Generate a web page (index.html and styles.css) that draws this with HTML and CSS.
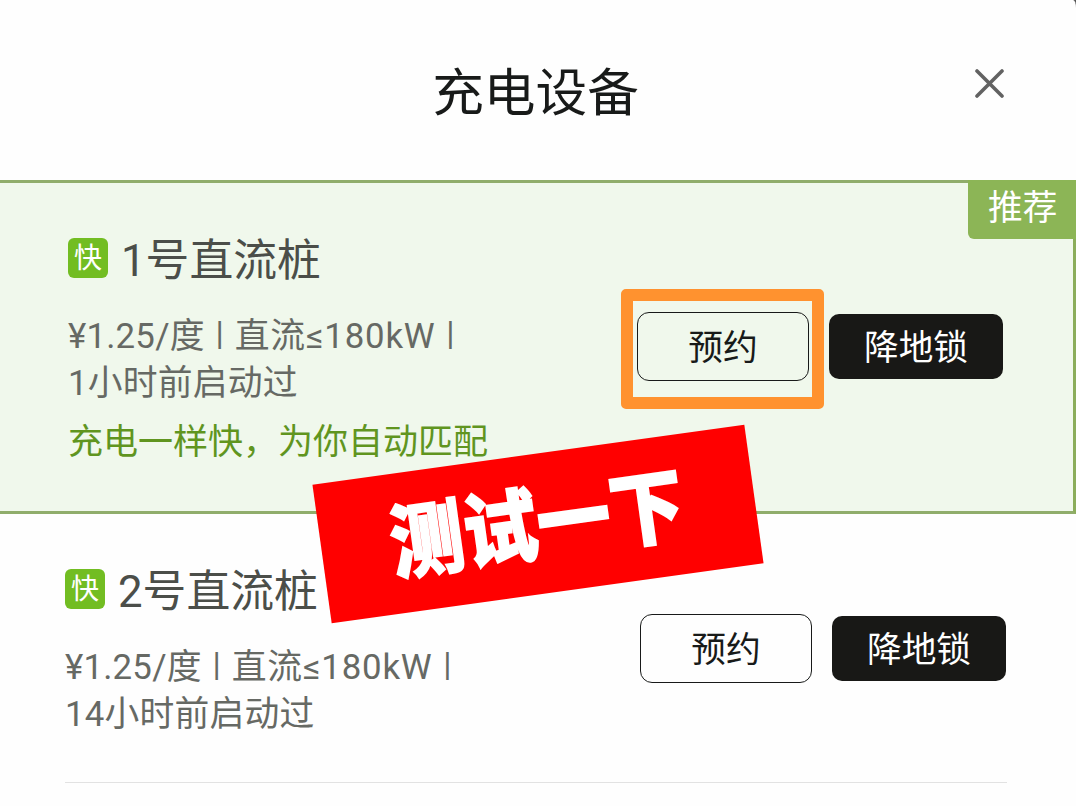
FILE: index.html
```html
<!DOCTYPE html>
<html lang="zh-CN">
<head>
    <meta charset="UTF-8">
    <meta name="viewport" content="width=device-width, initial-scale=1.0">
    <link rel="stylesheet" href="styles.css">
    <title>充电设备</title>
</head>
<body>
    <header class="header">
        <h1>充电设备</h1>
        <button class="close" aria-label="关闭">
            <svg width="30" height="30" viewBox="0 0 30 30" fill="none" stroke="#626262" stroke-width="3.6" stroke-linecap="round">
                <path d="M2 2L27 27M27 2L2 27"/>
            </svg>
        </button>
    </header>

    <div class="device recommended">
        <span class="ribbon">推荐</span>
        <div class="info">
            <h2><span class="tag">快</span>1号直流桩</h2>
            <p class="meta">¥1.25/度<span class="sep">|</span><span class="power">直流≤180kW</span><span class="sep">|</span></p>
            <p class="meta">1小时前启动过</p>
            <p class="match">充电一样快，为你自动匹配</p>
        </div>
        <div class="actions">
            <button class="btn highlight">预约</button>
            <button class="btn dark">降地锁</button>
        </div>
    </div>

    <div class="device">
        <div class="info">
            <h2><span class="tag">快</span>2号直流桩</h2>
            <p class="meta">¥1.25/度<span class="sep">|</span><span class="power">直流≤180kW</span><span class="sep">|</span></p>
            <p class="meta">14小时前启动过</p>
        </div>
        <div class="actions">
            <button class="btn">预约</button>
            <button class="btn dark">降地锁</button>
        </div>
    </div>

    <!-- Sticker lying over both rows -->
    <div class="sticker"><span>测试一下</span></div>
</body>
</html>
```
FILE: styles.css
```css
* {
    box-sizing: border-box;
}

html {
    background-color: #555;
}

body {
    font-family: Roboto, "Noto Sans CJK SC", sans-serif;
    margin: 0;
    height: 806px;
    position: relative;
    overflow: hidden;
    background-color: #fefefe;
    border-top-right-radius: 3px 8px;
}

h1, h2, p {
    margin: 0;
    font-weight: 400;
    white-space: nowrap;
}

.header {
    display: flex;
    justify-content: center;
    height: 180px;
    padding-top: 54px;
    position: relative;
}

h1 {
    font-size: 51.7px;
    line-height: 80px;
    color: #181a19;
    margin-right: 5px;
}

.close {
    position: absolute;
    top: 69px;
    right: 71px;
    width: 30px;
    height: 30px;
    padding: 0;
    border: none;
    background: none;
}

.close svg {
    display: block;
}

.device {
    display: flex;
    justify-content: space-between;
    height: 269px;
    margin: 0 69px 0 65px;
    padding-top: 45px;
    border-bottom: 1px solid #e2e2e2;
}

.recommended {
    position: relative;
    height: 334px;
    margin: 0;
    padding: 45px 71px 0 68px;
    background-color: #f0f8ec;
    border-top: 3px solid #90ad6b;
    border-right: 3px solid #8bad5b;
    border-bottom: 3px solid #90ad6b;
}

.ribbon {
    position: absolute;
    top: -3px;
    right: -3px;
    width: 108px;
    height: 59px;
    padding-left: 20px;
    font-size: 34.7px;
    line-height: 57px;
    color: #fff;
    background-color: #8cb556;
    border-bottom-left-radius: 6px;
}

h2 {
    display: flex;
    align-items: center;
    height: 60px;
    font-size: 43.8px;
    line-height: 60px;
    padding-top: 6px;
    color: #4b4e49;
}

.tag {
    width: 40px;
    height: 40px;
    margin: -6px 13px 0 0;
    border-radius: 6px;
    background-color: #72bd22;
    color: #fff;
    font-size: 28px;
    line-height: 42px;
    text-align: center;
}

.meta {
    font-size: 34.8px;
    line-height: 47px;
    letter-spacing: 0.2px;
    color: #666964;
}

h2 + .meta {
    margin-top: 25px;
}

.sep {
    display: inline-block;
    width: 30px;
    font-size: 34px;
    line-height: 1;
    text-align: center;
    vertical-align: 3px;
}

.power {
    letter-spacing: 0.8px;
}

.match {
    margin-top: 12px;
    font-size: 35px;
    line-height: 48px;
    color: #60951f;
}

.actions {
    display: flex;
    gap: 20px;
    padding: 55px 1px 0 0;
}

.recommended .actions {
    padding: 84px 0 0;
}

.btn {
    position: relative;
    width: 172px;
    height: 69px;
    padding: 4px 0 0;
    font-family: inherit;
    font-size: 34.7px;
    line-height: 1;
    color: #181a19;
    background: none;
    border: 1.5px solid #181a19;
    border-radius: 12px;
}

.dark {
    width: 174px;
    height: 65px;
    margin-top: 2px;
    color: #fff;
    background-color: #181816;
    border: none;
    border-radius: 10px;
}

.recommended .btn {
    left: 1px;
}

/* Orange marker frame around the button */
.highlight::after {
    content: "";
    position: absolute;
    top: -24px;
    right: -16px;
    bottom: -29px;
    left: -17px;
    border: 12px solid #ff922f;
    border-radius: 5px;
}

.sticker {
    position: absolute;
    left: 320px;
    top: 454px;
    width: 436px;
    height: 140px;
    display: flex;
    align-items: center;
    justify-content: center;
    background-color: #ff0000;
    color: #fff;
    transform: rotate(-7.9deg);
}

.sticker span {
    font-size: 74px;
    font-weight: 900;
    line-height: 1;
    -webkit-text-stroke: 1.5px #fff;
    transform: translate(-1px, 2px) scaleY(1.1);
}
```
